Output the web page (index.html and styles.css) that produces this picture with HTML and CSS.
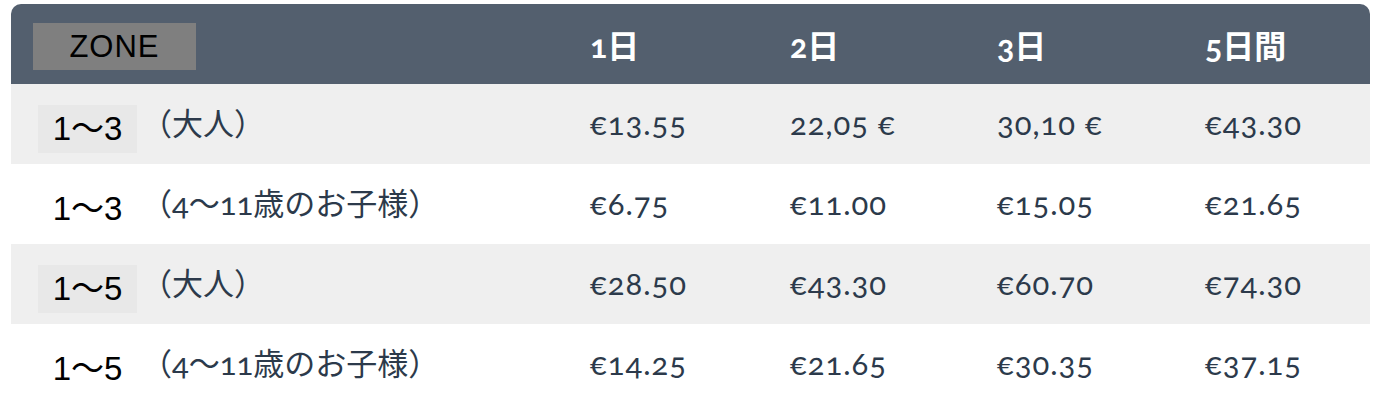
FILE: index.html
```html
<!DOCTYPE html>
<html lang="ja">
<head>
<meta charset="utf-8">
<title>Zone fares</title>
<link rel="stylesheet" href="styles.css">
</head>
<body>
<div class="fares">
  <div class="row head">
    <div class="cell zone-cell"><span class="zone">ZONE</span></div>
    <div class="cell">1日</div>
    <div class="cell">2日</div>
    <div class="cell">3日</div>
    <div class="cell">5日間</div>
  </div>
  <div class="row shade">
    <div class="cell zone-cell"><span class="zbox">1〜3</span><span class="who">（大人）</span></div>
    <div class="cell price">€13.55</div>
    <div class="cell price">22,05 €</div>
    <div class="cell price">30,10 €</div>
    <div class="cell price">€43.30</div>
  </div>
  <div class="row">
    <div class="cell zone-cell"><span class="zbox">1〜3</span><span class="who">（4〜11歳のお子様）</span></div>
    <div class="cell price">€6.75</div>
    <div class="cell price">€11.00</div>
    <div class="cell price">€15.05</div>
    <div class="cell price">€21.65</div>
  </div>
  <div class="row shade">
    <div class="cell zone-cell"><span class="zbox">1〜5</span><span class="who">（大人）</span></div>
    <div class="cell price">€28.50</div>
    <div class="cell price">€43.30</div>
    <div class="cell price">€60.70</div>
    <div class="cell price">€74.30</div>
  </div>
  <div class="row">
    <div class="cell zone-cell"><span class="zbox">1〜5</span><span class="who">（4〜11歳のお子様）</span></div>
    <div class="cell price">€14.25</div>
    <div class="cell price">€21.65</div>
    <div class="cell price">€30.35</div>
    <div class="cell price">€37.15</div>
  </div>
</div>
</body>
</html>
```
FILE: styles.css
```css
html, body {
  margin: 0;
  padding: 0;
  background: #ffffff;
}
body {
  padding: 4px 0 0 11px;
  font-family: "Lato", "Noto Sans CJK JP", sans-serif;
  color: #2c3a4b;
}
.fares {
  width: 1359px;
}
.row {
  display: grid;
  grid-template-columns: 557px 200px 207px 208px 187px;
  height: 80px;
  align-items: center;
}
.row.head {
  background: #535f6e;
  border-radius: 10px 10px 0 0;
  color: #ffffff;
  font-weight: 700;
  font-size: 32px;
  font-variant-numeric: oldstyle-nums;
}
.row.shade {
  background: #efefef;
}
.cell {
  padding-left: 22px;
  white-space: nowrap;
}
.zone {
  display: inline-block;
  width: 163px;
  height: 47px;
  line-height: 47px;
  margin-top: 5px;
  background: #7f7f7f;
  color: #000000;
  text-align: center;
  font-family: "Liberation Sans", "Noto Sans CJK JP", sans-serif;
  font-weight: 400;
  font-size: 31px;
  letter-spacing: 1px;
}
.row .zone-cell {
  display: flex;
  align-items: center;
}
.row:not(.head) .zone-cell {
  padding-left: 27px;
}
.zbox {
  display: inline-block;
  width: 99px;
  height: 48px;
  line-height: 48px;
  margin-top: 10px;
  text-align: center;
  color: #000000;
  font-family: "Liberation Sans", "Noto Sans CJK JP", sans-serif;
  font-size: 33px;
}
.shade .zbox {
  background: #e8e8e8;
}
.who {
  margin-left: 4px;
  margin-top: -5px;
  font-size: 31px;
  font-weight: 400;
  font-variant-numeric: oldstyle-nums;
}
.price {
  font-size: 31px;
  font-weight: 400;
  letter-spacing: 1px;
  padding-bottom: 2px;
  font-variant-numeric: oldstyle-nums;
}
```
